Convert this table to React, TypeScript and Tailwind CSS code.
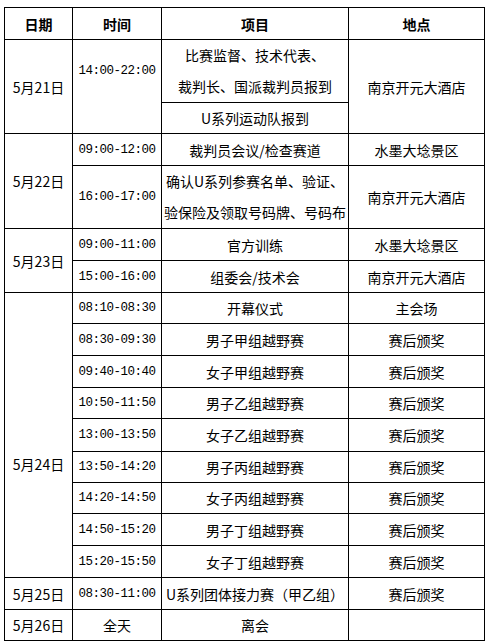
import React from "react";

const cell = "border border-black text-center align-middle p-0 whitespace-nowrap";
const time = "font-['Liberation_Mono',monospace] text-[12.5px] tracking-[-0.5px]";

interface Row {
  time: string;
  item: string;
  place: string;
  h: number;
}

const day24: Row[] = [
  { time: "08:10-08:30", item: "开幕仪式", place: "主会场", h: 31 },
  { time: "08:30-09:30", item: "男子甲组越野赛", place: "赛后颁奖", h: 32 },
  { time: "09:40-10:40", item: "女子甲组越野赛", place: "赛后颁奖", h: 32 },
  { time: "10:50-11:50", item: "男子乙组越野赛", place: "赛后颁奖", h: 31 },
  { time: "13:00-13:50", item: "女子乙组越野赛", place: "赛后颁奖", h: 33 },
  { time: "13:50-14:20", item: "男子丙组越野赛", place: "赛后颁奖", h: 31 },
  { time: "14:20-14:50", item: "女子丙组越野赛", place: "赛后颁奖", h: 31 },
  { time: "14:50-15:20", item: "男子丁组越野赛", place: "赛后颁奖", h: 32 },
  { time: "15:20-15:50", item: "女子丁组越野赛", place: "赛后颁奖", h: 32 },
];

export default function App() {
  return (
    <div className="w-[490px] h-[642px] bg-white pt-[7px] pl-[4px] text-black font-['Noto_Sans_CJK_SC','Noto_Sans',sans-serif]">
      <table className="w-[480px] table-fixed border-collapse text-[14px] leading-[20px]">
        <colgroup>
          <col className="w-[68px]" />
          <col className="w-[89px]" />
          <col className="w-[187px]" />
          <col className="w-[136px]" />
        </colgroup>
        <tbody>
          <tr className="h-[32px] font-bold">
            <td className={cell}>日期</td>
            <td className={cell}>时间</td>
            <td className={cell}>项目</td>
            <td className={cell}>地点</td>
          </tr>

          <tr className="h-[63px]">
            <td className={cell} rowSpan={2}>5月21日</td>
            <td className={`${cell} ${time} pb-[31px]`} rowSpan={2}>14:00-22:00</td>
            <td className={`${cell} leading-[31px]`}>
              比赛监督、技术代表、
              <br />
              裁判长、国派裁判员报到
            </td>
            <td className={cell} rowSpan={2}>南京开元大酒店</td>
          </tr>
          <tr className="h-[31px]">
            <td className={cell}>U系列运动队报到</td>
          </tr>

          <tr className="h-[32px]">
            <td className={cell} rowSpan={2}>5月22日</td>
            <td className={`${cell} ${time}`}>09:00-12:00</td>
            <td className={cell}>裁判员会议/检查赛道</td>
            <td className={cell}>水墨大埝景区</td>
          </tr>
          <tr className="h-[63px]">
            <td className={`${cell} ${time}`}>16:00-17:00</td>
            <td className={`${cell} leading-[31px]`}>
              确认U系列参赛名单、验证、
              <br />
              验保险及领取号码牌、号码布
            </td>
            <td className={cell}>南京开元大酒店</td>
          </tr>

          <tr className="h-[32px]">
            <td className={cell} rowSpan={2}>5月23日</td>
            <td className={`${cell} ${time}`}>09:00-11:00</td>
            <td className={cell}>官方训练</td>
            <td className={cell}>水墨大埝景区</td>
          </tr>
          <tr className="h-[32px]">
            <td className={`${cell} ${time}`}>15:00-16:00</td>
            <td className={cell}>组委会/技术会</td>
            <td className={cell}>南京开元大酒店</td>
          </tr>

          {day24.map((r, i) => (
            <tr key={r.time} style={{ height: r.h }}>
              {i === 0 && (
                <td className={`${cell} pt-[57px]`} rowSpan={day24.length}>
                  5月24日
                </td>
              )}
              <td className={`${cell} ${time}`}>{r.time}</td>
              <td className={cell}>{r.item}</td>
              <td className={cell}>{r.place}</td>
            </tr>
          ))}

          <tr className="h-[32px]">
            <td className={cell}>5月25日</td>
            <td className={`${cell} ${time}`}>08:30-11:00</td>
            <td className={cell}>U系列团体接力赛（甲乙组）</td>
            <td className={cell}>赛后颁奖</td>
          </tr>
          <tr className="h-[31px]">
            <td className={cell}>5月26日</td>
            <td className={cell}>全天</td>
            <td className={cell}>离会</td>
            <td className={cell}></td>
          </tr>
        </tbody>
      </table>
    </div>
  );
}
